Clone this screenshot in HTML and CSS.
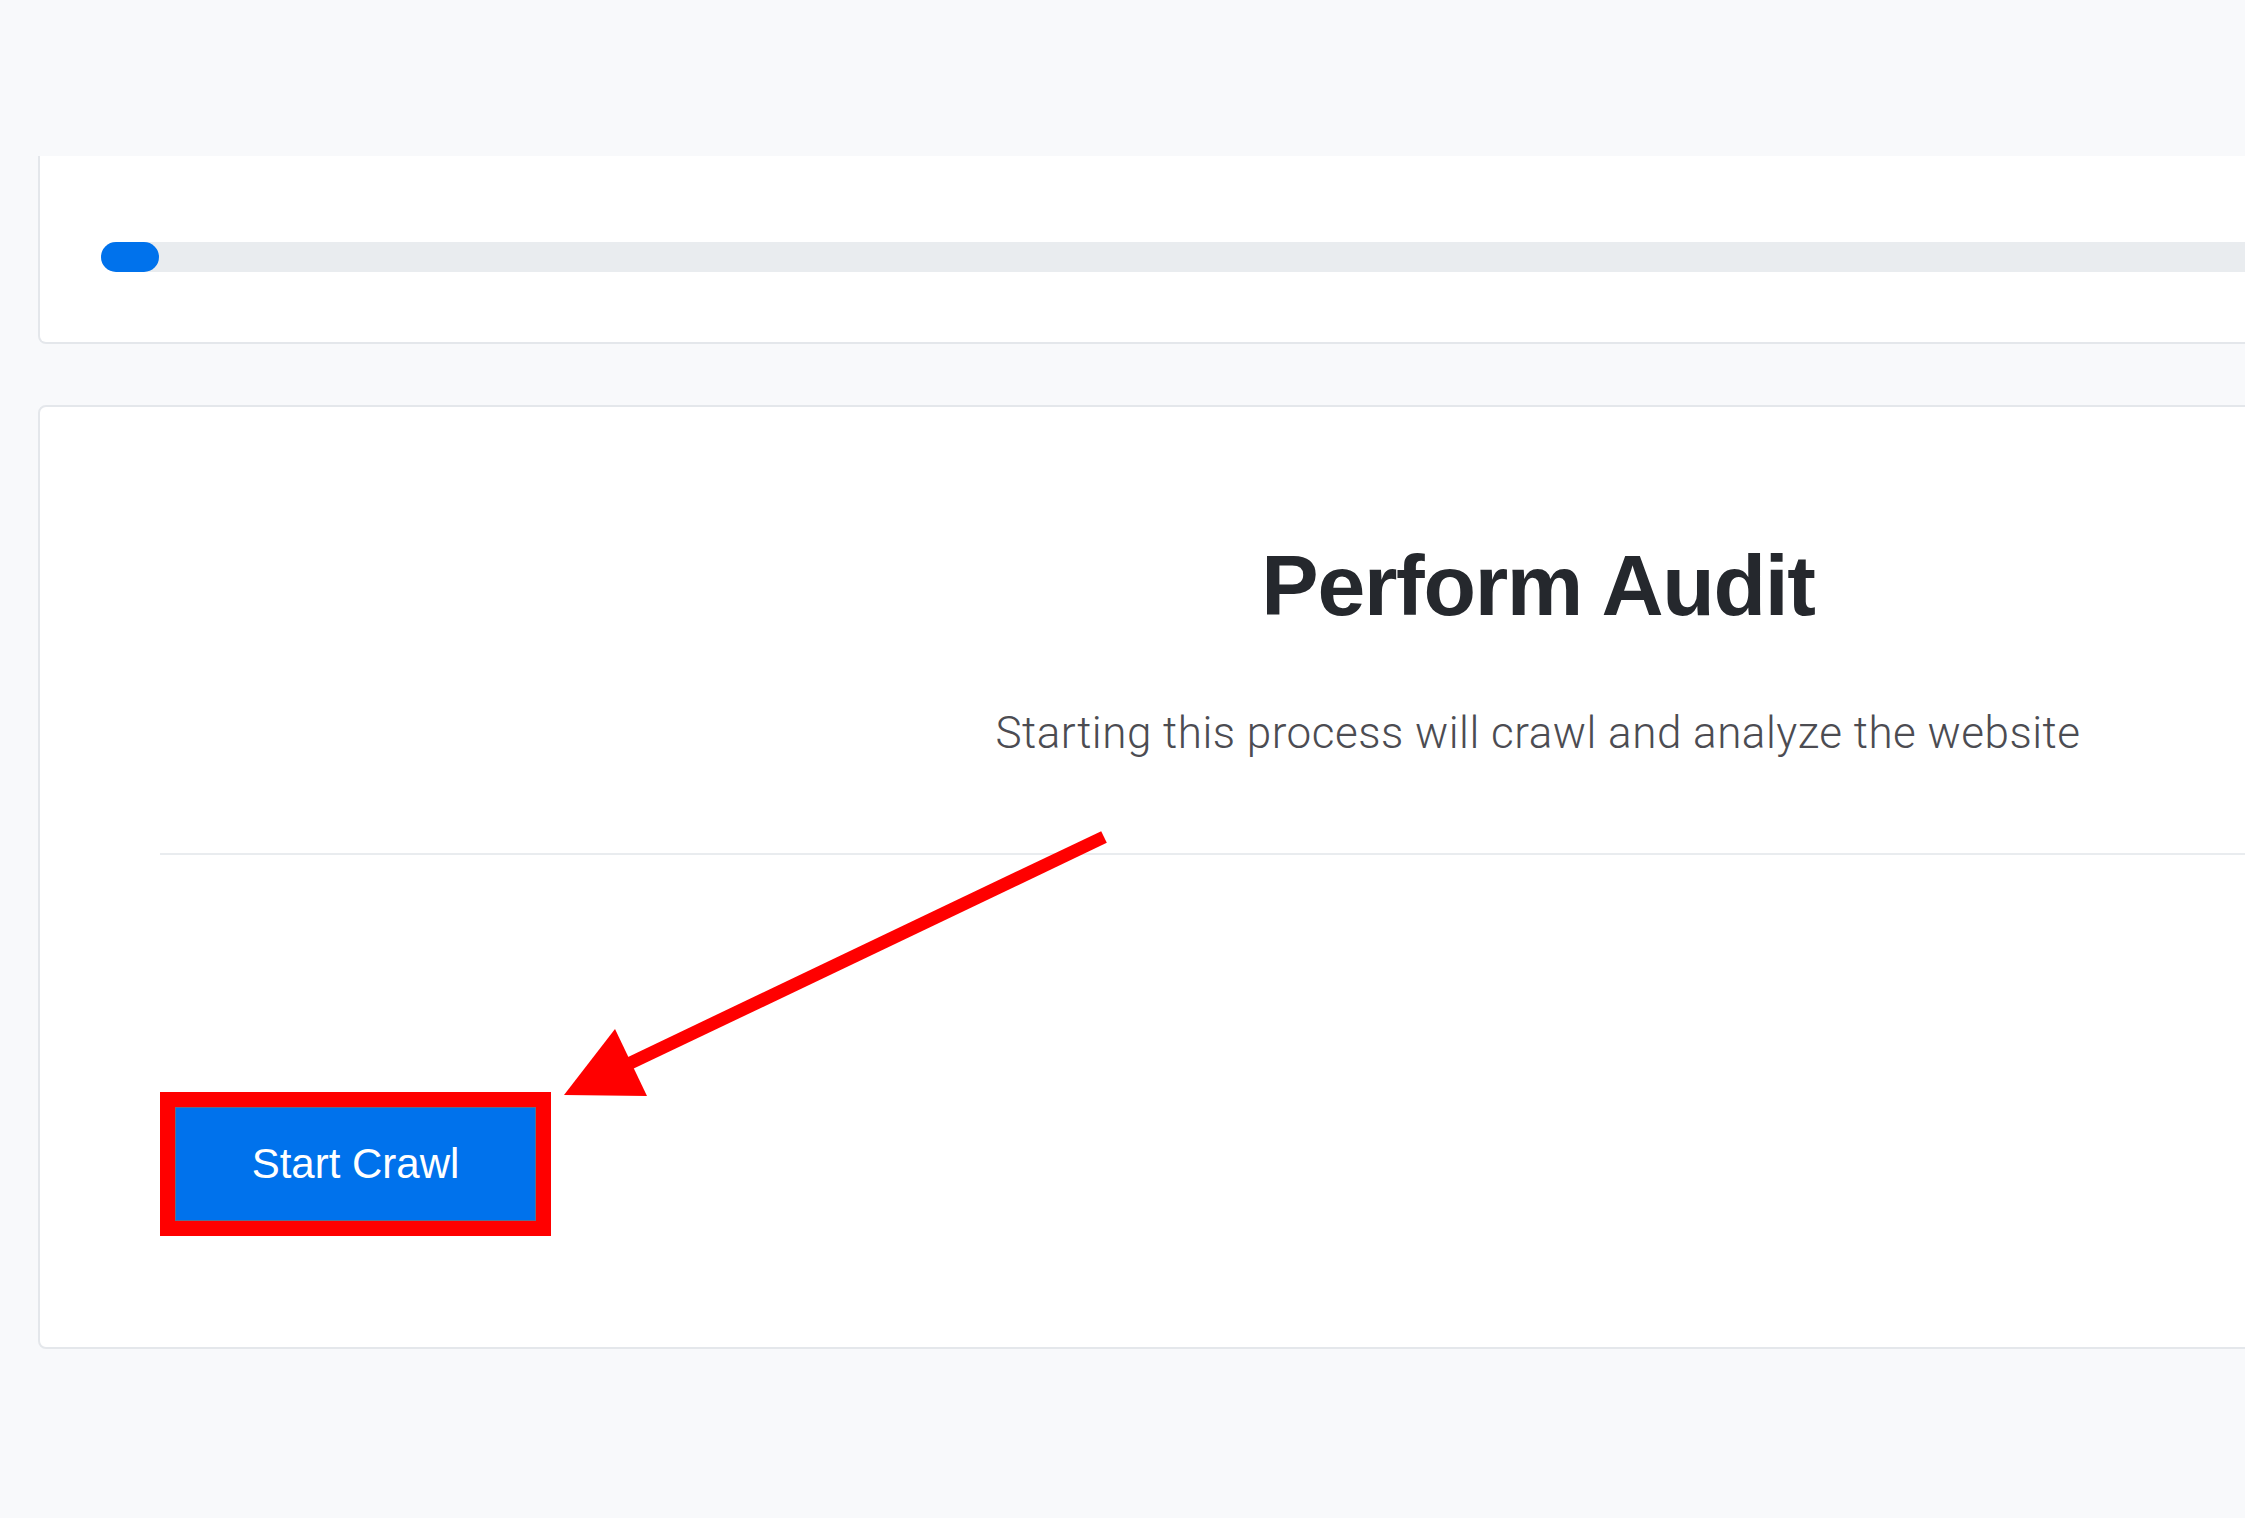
FILE: index.html
```html
<!DOCTYPE html>
<html lang="en">
<head>
<meta charset="utf-8">
<title>Perform Audit</title>
<link rel="stylesheet" href="styles.css">
</head>
<body>
<div class="page">
  <div class="header"></div>
  <section class="card card-progress">
    <div class="track"><div class="bar" style="width:58px"></div></div>
  </section>
  <section class="card card-main">
    <h1 class="title">Perform Audit</h1>
    <p class="subtitle">Starting this process will crawl and analyze the website</p>
    <hr class="divider">
    <div class="actions">
      <button class="btn-start" type="button">Start Crawl</button>
    </div>
  </section>
  <svg class="annotation" width="2245" height="1518" viewBox="0 0 2245 1518" aria-hidden="true">
    <line x1="1104" y1="837" x2="622" y2="1067" stroke="#ff0000" stroke-width="13"/>
    <polygon points="564,1095 615,1029 647,1096" fill="#ff0000"/>
  </svg>
</div>
</body>
</html>
```
FILE: styles.css
```css
html, body {
  margin: 0;
  padding: 0;
  overflow: hidden;
}
body {
  background: #f8f9fb;
  font-family: "Liberation Sans", Arial, sans-serif;
  width: 2245px;
  height: 1518px;
}
.page {
  position: relative;
  width: 2245px;
  height: 1518px;
}
.header {
  height: 156px;
  background: #f8f9fb;
}
.card {
  box-sizing: border-box;
  width: 3000px;
  margin-left: 38px;
  background: #ffffff;
  border: 2px solid #e4e7eb;
  border-radius: 8px;
}
.card-progress {
  border-top: none;
  border-radius: 0 0 8px 8px;
  padding: 86px 0 70px 61px;
}
.track {
  height: 30px;
  background: #e9ecef;
  border-radius: 15px 0 0 15px;
}
.bar {
  height: 30px;
  background: #0072ec;
  border-radius: 15px;
}
.card-main {
  margin-top: 61px;
  padding: 135px 120px 126px 120px;
}
.title {
  margin: 0;
  font-family: "Liberation Sans", Arial, sans-serif;
  font-weight: 700;
  font-size: 86px;
  line-height: 1;
  letter-spacing: -1.3px;
  text-align: center;
  color: #25282d;
}
.subtitle {
  margin: 83px 0 0 0;
  font-family: Roboto, "Liberation Sans", sans-serif;
  font-weight: 300;
  font-size: 44px;
  line-height: 1;
  letter-spacing: 0.5px;
  text-align: center;
  color: #4c4c52;
}
.divider {
  margin: 98px 0 0 0;
  border: none;
  height: 2px;
  background: #e9ecef;
}
.actions {
  margin-top: 252px;
  padding-left: 15px;
  display: flex;
}
.btn-start {
  box-sizing: border-box;
  width: 361px;
  height: 114px;
  padding: 0;
  background: #0072ec;
  border: 1px solid #5a6f8e;
  border-radius: 0;
  outline: 15px solid #ff0000;
  outline-offset: 0;
  color: #ffffff;
  font-family: "Liberation Sans", Arial, sans-serif;
  font-size: 42px;
  font-weight: 400;
  display: flex;
  align-items: center;
  justify-content: center;
}
.annotation {
  position: absolute;
  left: 0;
  top: 0;
  pointer-events: none;
}
```
